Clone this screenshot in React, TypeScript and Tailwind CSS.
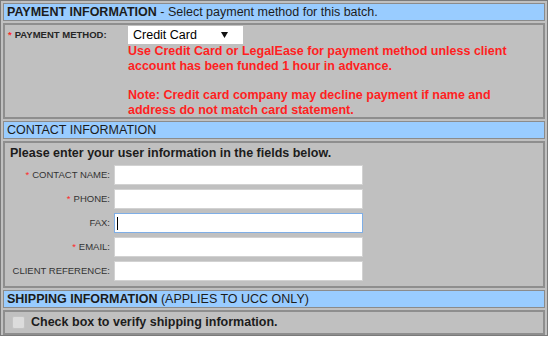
import React from "react";

const FONT = "font-['Liberation_Sans',Arial,sans-serif]";

type Field = {
  label: string;
  required?: boolean;
  focused?: boolean;
};

const FIELDS: Field[] = [
  { label: "CONTACT NAME:", required: true },
  { label: "PHONE:", required: true },
  { label: "FAX:", focused: true },
  { label: "EMAIL:", required: true },
  { label: "CLIENT REFERENCE:" },
];

function SectionHeader({ children }: { children: React.ReactNode }) {
  return (
    <div className="flex h-[18px] shrink-0 items-center border border-[#8b8b8b] bg-[#99ccff] pl-[3px] text-[12.5px] whitespace-nowrap text-[#1c1c1c]">
      {children}
    </div>
  );
}

function Box({
  className,
  children,
}: {
  className?: string;
  children: React.ReactNode;
}) {
  return (
    <div className={`shrink-0 border-2 border-[#8e8e8e] ${className ?? ""}`}>
      {children}
    </div>
  );
}

function Asterisk() {
  return <span className="mr-[3px] text-[#ff2a2a]">*</span>;
}

export default function App() {
  return (
    <div className={`${FONT} h-[337px] w-[550px] bg-white`}>
      <div className="flex h-[336px] w-[548px] flex-col gap-[2px] border border-[#7b7b7b] bg-[#c0c0c0] p-[2px]">
        {/* Payment */}
        <SectionHeader>
          <span className="font-bold">PAYMENT INFORMATION</span>
          <span>&nbsp;- Select payment method for this batch.</span>
        </SectionHeader>
        <Box className="flex h-[96px]">
          <div className="w-[123px] shrink-0 pl-[3px]">
            <div className="mt-[1px] flex h-[18px] items-center text-[9.5px] font-bold text-[#262626]">
              <Asterisk />
              PAYMENT METHOD:
            </div>
          </div>
          <div className="flex flex-col">
            <div className="mt-[1px] flex h-[18px] w-[115px] items-center justify-between bg-white pr-[15px] pl-[5px] text-[12.5px] text-black">
              <span>Credit Card</span>
              <svg width="7" height="6" viewBox="0 0 7 6">
                <polygon points="0,0 7,0 3.5,6" fill="#111" />
              </svg>
            </div>
            <p className="text-[12.5px] leading-[14.7px] font-bold whitespace-nowrap text-[#ff1f1f]">
              Use Credit Card or LegalEase for payment method unless client
              <br />
              account has been funded 1 hour in advance.
              <br />
              <br />
              Note: Credit card company may decline payment if name and
              <br />
              address do not match card statement.
            </p>
          </div>
        </Box>

        {/* Contact */}
        <SectionHeader>
          <span>CONTACT INFORMATION</span>
        </SectionHeader>
        <Box className="flex h-[147px] flex-col pt-[3px] pl-[5px]">
          <p className="text-[12.5px] leading-[15px] font-bold text-[#1c1c1c]">
            Please enter your user information in the fields below.
          </p>
          <div className="mt-[4px] flex flex-col gap-[4px]">
            {FIELDS.map((f) => (
              <div key={f.label} className="flex items-center">
                <div className="w-[100px] shrink-0 text-right text-[9.5px] whitespace-nowrap text-[#333]">
                  {f.required && <Asterisk />}
                  {f.label}
                </div>
                <div
                  className={`ml-[4px] flex h-[20px] w-[249px] items-center border bg-white ${
                    f.focused ? "border-[#7eaee6]" : "border-[#d2d2d2]"
                  }`}
                >
                  {f.focused && (
                    <span className="ml-[2px] h-[13px] w-[1px] bg-black" />
                  )}
                </div>
              </div>
            ))}
          </div>
        </Box>

        {/* Shipping */}
        <SectionHeader>
          <span className="font-bold">SHIPPING INFORMATION</span>
          <span>&nbsp;(APPLIES TO UCC ONLY)</span>
        </SectionHeader>
        <Box className="flex h-[25px] items-center pl-[7px]">
          <span className="h-[13px] w-[13px] rounded-[2px] border border-[#c4c4c4] bg-[#dcdcdc]" />
          <span className="ml-[6px] text-[12.5px] font-bold text-[#1c1c1c]">
            Check box to verify shipping information.
          </span>
        </Box>
      </div>
    </div>
  );
}
